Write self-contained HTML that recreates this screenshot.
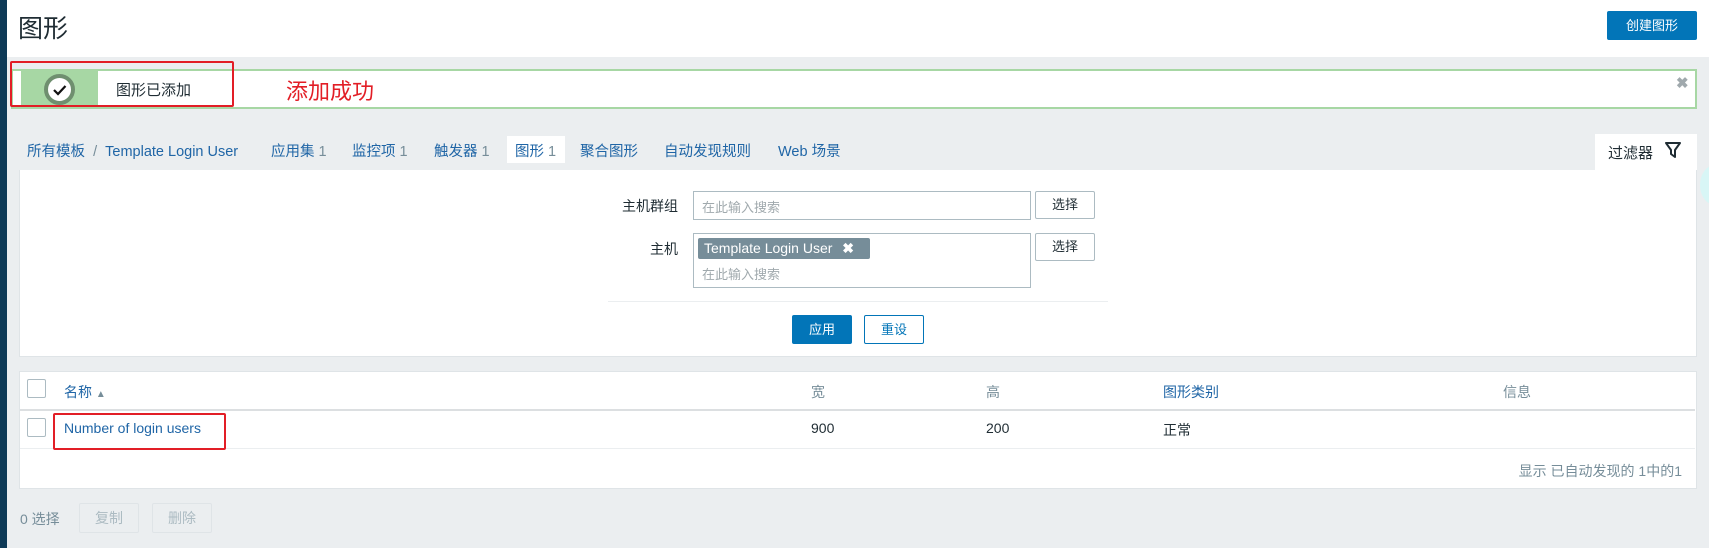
<!DOCTYPE html>
<html><head><meta charset="utf-8">
<style>
*{box-sizing:border-box;margin:0;padding:0}
body{width:1709px;height:548px;overflow:hidden;background:#ebeef0;font-family:"Liberation Sans","Noto Sans CJK SC",sans-serif;font-size:13px;color:#1f2c33;position:relative}
.abs{position:absolute}
.btn{position:absolute;border:1px solid #0275b8;border-radius:2px;text-align:center;font-size:13px}
.inp{position:absolute;border:1px solid #acbbc2;background:#fff}
.ph{color:#a0a9ad;font-size:13px}
.sel{position:absolute;border:1px solid #acbbc2;border-radius:2px;background:#fff;text-align:center;line-height:26px;color:#1f2c33;font-size:13px}
.cb{position:absolute;width:19px;height:19px;border:1px solid #acbbc2;border-radius:2px;background:#fff}
.tab{position:absolute;top:140px;font-size:14.5px;color:#1f65a6}
</style></head><body>
<div class="abs" style="left:0;top:0;width:7px;height:548px;background:#0e3a57"></div>
<div class="abs" style="left:7px;top:0;width:1702px;height:57px;background:#fff"></div>
<div class="abs" style="left:18px;top:9px;font-size:25px;color:#1f2c33">图形</div>
<div class="btn" style="left:1607px;top:11px;width:90px;height:29px;background:#0275b8;color:#fff;line-height:27px">创建图形</div>

<div class="abs" style="left:11px;top:69px;width:1686px;height:40px;border:2px solid #a7d7a4;background:#fff"></div>
<div class="abs" style="left:21px;top:70px;width:77px;height:37px;background:#a7d7a4"></div>
<div class="abs" style="left:44px;top:74px;width:31px;height:31px;border-radius:50%;border:4px solid #6f8f6f;background:#fff"></div>
<svg class="abs" style="left:44px;top:74px" width="31" height="31"><path d="M10 16l4 4 7.5-8" fill="none" stroke="#111" stroke-width="2.2"/></svg>
<div class="abs" style="left:116px;top:79px;font-size:15px">图形已添加</div>
<div class="abs" style="left:10px;top:61px;width:224px;height:46px;border:2px solid #e21e26;border-radius:2px"></div>
<div class="abs" style="left:286px;top:74px;font-size:22px;color:#e21e26">添加成功</div>
<div class="abs" style="left:1676px;top:74px;font-size:15px;color:#a0a9ad;font-weight:bold">✖</div>

<div class="abs" style="left:507px;top:136px;width:58px;height:27px;background:#fff"></div>
<div class="tab" style="left:27px;white-space:pre">所有模板  <span style="color:#768d99">/</span>  Template Login User</div>
<div class="tab" style="left:271px">应用集 <span style="color:#768d99">1</span></div>
<div class="tab" style="left:352px">监控项 <span style="color:#768d99">1</span></div>
<div class="tab" style="left:434px">触发器 <span style="color:#768d99">1</span></div>
<div class="tab" style="left:515px">图形 <span style="color:#768d99">1</span></div>
<div class="tab" style="left:580px">聚合图形</div>
<div class="tab" style="left:664px">自动发现规则</div>
<div class="tab" style="left:778px">Web 场景</div>

<div class="abs" style="left:1595px;top:134px;width:102px;height:40px;background:#fff"></div>
<div class="abs" style="left:1608px;top:142px;font-size:15px">过滤器</div>
<svg class="abs" style="left:1664px;top:141px" width="18" height="18"><path d="M2 2h14l-5 7v7l-4-3V9z" fill="none" stroke="#1f2c33" stroke-width="2" stroke-linejoin="round"/></svg>

<div class="abs" style="left:19px;top:170px;width:1678px;height:187px;background:#fff;border:1px solid #dfe4e7;border-top:none"></div>
<div class="abs" style="left:618px;top:196px;font-size:14px;width:60px;text-align:right">主机群组</div>
<div class="inp" style="left:693px;top:191px;width:338px;height:29px;padding:5px 8px"><span class="ph">在此输入搜索</span></div>
<div class="sel" style="left:1035px;top:191px;width:60px;height:28px">选择</div>
<div class="abs" style="left:618px;top:239px;font-size:14px;width:60px;text-align:right">主机</div>
<div class="inp" style="left:693px;top:233px;width:338px;height:55px"></div>
<div class="abs" style="left:698px;top:238px;width:172px;height:21px;background:#768d99;border-radius:2px;color:#fff;font-size:14px;line-height:21px;padding-left:6px">Template Login User <b style="margin-left:6px">✖</b></div>
<div class="abs ph" style="left:702px;top:264px">在此输入搜索</div>
<div class="sel" style="left:1035px;top:233px;width:60px;height:28px">选择</div>
<div class="abs" style="left:608px;top:301px;width:500px;height:1px;background:#ebeef0"></div>
<div class="btn" style="left:792px;top:315px;width:60px;height:29px;background:#0275b8;color:#fff;line-height:27px">应用</div>
<div class="btn" style="left:864px;top:315px;width:60px;height:29px;background:#fff;color:#0275b8;line-height:27px">重设</div>

<div class="abs" style="left:19px;top:371px;width:1678px;height:118px;background:#fff;border:1px solid #dfe4e7"></div>
<div class="abs" style="left:20px;top:409px;width:1675px;height:2px;background:#dcdfe1"></div>
<div class="abs" style="left:20px;top:448px;width:1675px;height:1px;background:#ebeef0"></div>
<div class="cb" style="left:27px;top:379px"></div>
<div class="cb" style="left:27px;top:418px"></div>
<div class="abs" style="left:64px;top:382px;font-size:14px;color:#1f65a6">名称 <span style="font-size:10px;color:#768d99">▲</span></div>
<div class="abs" style="left:811px;top:382px;font-size:14px;color:#768d99">宽</div>
<div class="abs" style="left:986px;top:382px;font-size:14px;color:#768d99">高</div>
<div class="abs" style="left:1163px;top:382px;font-size:14px;color:#1f65a6">图形类别</div>
<div class="abs" style="left:1503px;top:382px;font-size:14px;color:#768d99">信息</div>
<div class="abs" style="left:64px;top:420px;font-size:14px;color:#1f65a6">Number of login users</div>
<div class="abs" style="left:811px;top:420px;font-size:14px">900</div>
<div class="abs" style="left:986px;top:420px;font-size:14px">200</div>
<div class="abs" style="left:1163px;top:420px;font-size:14px">正常</div>
<div class="abs" style="left:53px;top:413px;width:173px;height:37px;border:2px solid #e21e26;border-radius:2px"></div>
<div class="abs" style="left:1400px;top:461px;width:282px;text-align:right;font-size:14px;color:#768d99">显示 已自动发现的 1中的1</div>

<div class="abs" style="left:20px;top:509px;font-size:14px;color:#768d99">0 选择</div>
<div class="abs" style="left:79px;top:503px;width:60px;height:30px;border:1px solid #dfe4e7;border-radius:2px;text-align:center;line-height:28px;color:#acbbc2;font-size:14px">复制</div>
<div class="abs" style="left:152px;top:503px;width:60px;height:30px;border:1px solid #dfe4e7;border-radius:2px;text-align:center;line-height:28px;color:#acbbc2;font-size:14px">删除</div>
<div class="abs" style="left:1700px;top:165px;width:30px;height:40px;border-radius:50%;background:#d8f6f6"></div>
</body></html>
